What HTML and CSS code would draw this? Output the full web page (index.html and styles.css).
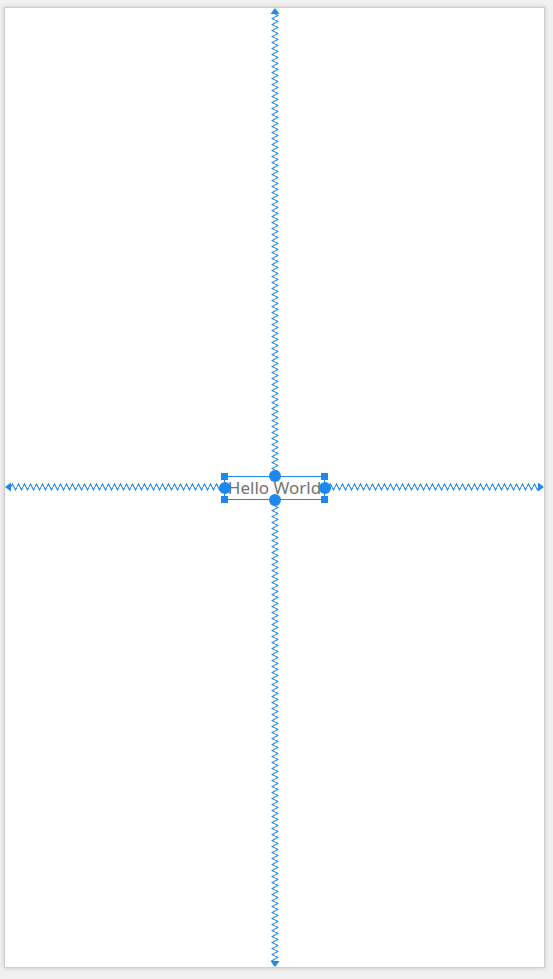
FILE: index.html
```html
<!DOCTYPE html>
<html lang="en">
<head>
    <meta charset="UTF-8">
    <meta name="viewport" content="width=device-width, initial-scale=1.0">
    <title>Layout Editor</title>
    <link rel="stylesheet" href="styles.css">
</head>
<body>
    <div class="design-surface">
        <!-- constraints drawn over the canvas -->
        <svg class="constraints" width="539" height="959" viewBox="0 0 539 959">
            <defs>
                <pattern id="zig-v" patternUnits="userSpaceOnUse" x="266" y="0" width="8" height="6">
                    <path d="M4 0 L7 1.5 L1 4.5 L4 6" fill="none" stroke="#1e88f0" stroke-width="1.1"/>
                </pattern>
                <pattern id="zig-h" patternUnits="userSpaceOnUse" x="0" y="475" width="6" height="8">
                    <path d="M0 4 L1.5 1 L4.5 7 L6 4" fill="none" stroke="#1e88f0" stroke-width="1.1"/>
                </pattern>
            </defs>
            <rect x="266" y="6" width="8" height="461" fill="url(#zig-v)"/>
            <rect x="266" y="491" width="8" height="462" fill="url(#zig-v)"/>
            <rect x="6" y="475" width="214" height="8" fill="url(#zig-h)"/>
            <rect x="321" y="475" width="212" height="8" fill="url(#zig-h)"/>
            <polygon points="270,0 265.5,6 274.5,6" fill="#1e88f0"/>
            <polygon points="270,959 265.5,953 274.5,953" fill="#1e88f0"/>
            <polygon points="0,479 6,474.5 6,483.5" fill="#1e88f0"/>
            <polygon points="539,479 533,474.5 533,483.5" fill="#1e88f0"/>
        </svg>

        <div class="text-view">
            <span class="label">Hello World</span>
            <span class="corner tl"></span>
            <span class="corner tr"></span>
            <span class="corner bl"></span>
            <span class="corner br"></span>
            <span class="anchor top"></span>
            <span class="anchor bottom"></span>
            <span class="anchor left"></span>
            <span class="anchor right"></span>
        </div>
    </div>
</body>
</html>
```

FILE: styles.css
```css
body {
    margin: 0;
    padding: 8px 0 0 5px;
    background-color: #f0f0f0;
    font-family: "Noto Sans", Roboto, sans-serif;
    height: 979px;
    box-sizing: border-box;
}
.design-surface {
    position: relative;
    width: 539px;
    height: 959px;
    background: #fff;
    box-shadow: 0 0 0 1px #cfcfcf, 0 0 4px 1px rgba(0, 0, 0, 0.18);
    display: flex;
    align-items: center;
    justify-content: center;
}
.constraints {
    position: absolute;
    left: 0;
    top: 0;
}
.text-view {
    position: relative;
    width: 101px;
    height: 24px;
    border: 1px solid #1e88f0;
    box-sizing: border-box;
    display: flex;
    align-items: center;
    justify-content: center;
}
.label {
    font-size: 17px;
    color: #737373;
    white-space: nowrap;
    line-height: 20px;
}
.corner {
    position: absolute;
    width: 7px;
    height: 7px;
    background: #1e88f0;
}
.tl { left: -4px; top: -4px; }
.tr { right: -4px; top: -4px; }
.bl { left: -4px; bottom: -4px; }
.br { right: -4px; bottom: -4px; }
.anchor {
    position: absolute;
    width: 12px;
    height: 12px;
    border-radius: 50%;
    background: #1e88f0;
}
.anchor.top { left: 43.5px; top: -7px; }
.anchor.bottom { left: 43.5px; bottom: -7px; }
.anchor.left { left: -6.5px; top: 5px; }
.anchor.right { right: -6.5px; top: 5px; }
```
